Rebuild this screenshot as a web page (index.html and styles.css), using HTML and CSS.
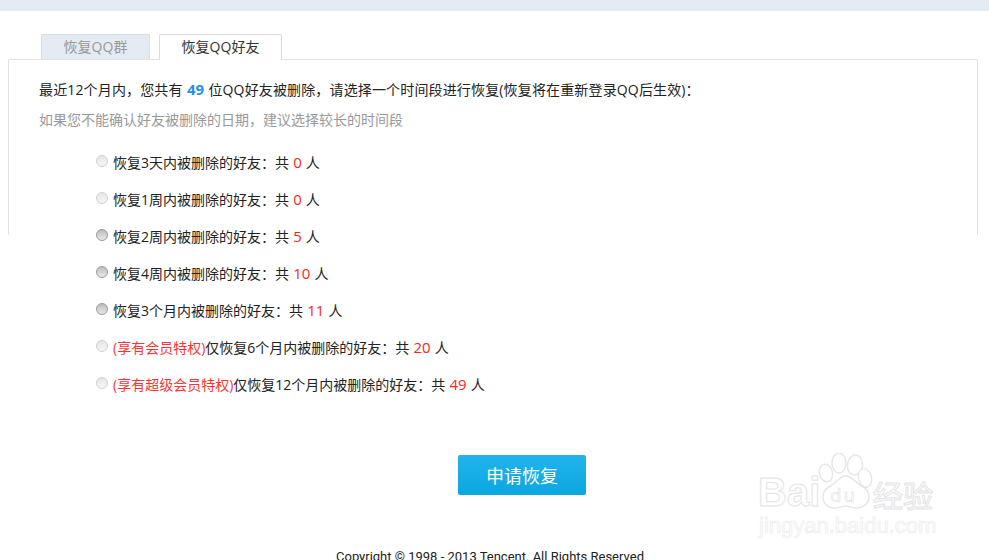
FILE: index.html
```html
<!DOCTYPE html>
<html lang="zh-CN">
<head>
<meta charset="utf-8">
<title>恢复QQ好友</title>
<link rel="stylesheet" href="styles.css">
</head>
<body>
<div class="topbar"></div>
<main class="page">
  <nav class="tabs">
    <a class="tab">恢复QQ群</a>
    <a class="tab tab-active">恢复QQ好友</a>
  </nav>
  <section class="panel">
    <p class="lead">最近12个月内，您共有 <b class="total">49</b> 位QQ好友被删除，请选择一个时间段进行恢复(恢复将在重新登录QQ后生效)：</p>
    <p class="hint">如果您不能确认好友被删除的日期，建议选择较长的时间段</p>
    <ul class="options">
      <li class="option"><span class="radio"></span><span>恢复3天内被删除的好友：共 <em class="num">0</em> 人</span></li>
      <li class="option"><span class="radio"></span><span>恢复1周内被删除的好友：共 <em class="num">0</em> 人</span></li>
      <li class="option"><span class="radio radio-on"></span><span>恢复2周内被删除的好友：共 <em class="num">5</em> 人</span></li>
      <li class="option"><span class="radio radio-on"></span><span>恢复4周内被删除的好友：共 <em class="num">10</em> 人</span></li>
      <li class="option"><span class="radio radio-on"></span><span>恢复3个月内被删除的好友：共 <em class="num">11</em> 人</span></li>
      <li class="option"><span class="radio"></span><span><span class="vip">(享有会员特权)</span>仅恢复6个月内被删除的好友：共 <em class="num">20</em> 人</span></li>
      <li class="option"><span class="radio"></span><span><span class="vip">(享有超级会员特权)</span>仅恢复12个月内被删除的好友：共 <em class="num">49</em> 人</span></li>
    </ul>
  </section>
  <div class="actions"><button class="submit" type="button">申请恢复</button></div>
  <footer class="footer">Copyright © 1998 - 2013 Tencent. All Rights Reserved</footer>
</main>
<div class="watermark">
  <svg class="paw" width="62" height="62" viewBox="0 0 62 62" fill="#fff" stroke="#e6e6e6" stroke-width="1.4">
    <ellipse cx="9" cy="20" rx="6.5" ry="9" transform="rotate(-15 9 20)"/>
    <ellipse cx="22" cy="10" rx="7" ry="10"/>
    <ellipse cx="38" cy="12" rx="7.5" ry="10" transform="rotate(8 38 12)"/>
    <ellipse cx="48" cy="25" rx="6.5" ry="9.5" transform="rotate(-15 48 25)"/>
    <path d="M29 23c6 0 9 6 14 9 6 3 9 7 9 12 0 7-6 11-13 11-4 0-7-2-10-2s-7 2-11 2c-7 0-12-4-12-11 0-5 3-9 9-12 5-3 8-9 14-9z"/>
  </svg>
  <span class="wm-bai">Bai</span>
  <span class="wm-du">du</span>
  <span class="wm-cn">经验</span>
  <span class="wm-url">jingyan.baidu.com</span>
</div>
</body>
</html>
```
FILE: styles.css
```css
html, body {
  margin: 0;
  height: 560px;
  overflow: hidden;
  background: #fff;
}
body {
  position: relative;
  font-family: "Open Sans", "Noto Sans CJK SC", sans-serif;
  font-size: 14px;
  color: #222;
}
.topbar {
  height: 11px;
  background: #e4ebf2;
}
.page {
  padding: 23px 11px 0 8px;
}
.tabs {
  display: flex;
  gap: 9px;
  padding-left: 33px;
  height: 25px;
  position: relative;
  z-index: 1;
}
.tab {
  box-sizing: border-box;
  width: 109px;
  height: 25px;
  border: 1px solid #d9dde2;
  border-bottom: 0;
  border-radius: 2px 2px 0 0;
  background: #e4ebf2;
  color: #999;
  text-align: center;
  line-height: 23px;
}
.tab-active {
  width: 123px;
  height: 26px;
  background: #fff;
  color: #333;
}
.panel {
  box-sizing: border-box;
  height: 176px;
  padding: 19px 0 0 30px;
  border: 1px solid #e2e2e2;
  border-bottom: 0;
  border-radius: 2px 2px 0 0;
}
.lead, .hint {
  margin: 0;
  height: 30px;
  line-height: 22px;
  white-space: nowrap;
}
.lead {
  letter-spacing: 0.15px;
  word-spacing: 0.5px;
  color: #222;
}
.total {
  font-size: 15px;
  line-height: 1;
  letter-spacing: 0;
  color: #2a8fe8;
}
.hint {
  color: #999;
}
.options {
  margin: 0;
  padding: 4px 0 0 57px;
  list-style: none;
}
.option {
  display: flex;
  align-items: center;
  gap: 5px;
  height: 37px;
  white-space: nowrap;
  word-spacing: 0.5px;
}
.radio {
  box-sizing: border-box;
  width: 12px;
  height: 12px;
  margin-top: -1px;
  border: 1px solid #d0d0d0;
  border-radius: 50%;
  background: linear-gradient(#e6e6e6, #f6f6f6);
}
.radio-on {
  border-color: #9a9a9a;
  background: linear-gradient(#bdbdbd, #e8e8e8);
}
.num {
  font-style: normal;
  font-size: 15px;
  line-height: 1;
  color: #f22;
}
.vip {
  color: #f33;
}
.actions {
  display: flex;
  justify-content: center;
  margin-top: 220px;
  padding-left: 58px;
}
.submit {
  width: 128px;
  height: 40px;
  border: 0;
  border-radius: 2px;
  background: linear-gradient(#22b4ec, #0ca6e0);
  color: #fff;
  font: 18px "Noto Sans CJK SC", sans-serif;
}
.footer {
  margin-top: 53px;
  padding-left: 328px;
  font-family: "Roboto", sans-serif;
  font-size: 13px;
  line-height: 18px;
  white-space: nowrap;
  color: #222;
}
.watermark {
  position: absolute;
  left: 0;
  top: 0;
  width: 989px;
  height: 560px;
  pointer-events: none;
}
.paw {
  position: absolute;
  left: 817px;
  top: 453px;
}
.wm-bai, .wm-du, .wm-cn, .wm-url {
  position: absolute;
  font-family: "Liberation Sans", sans-serif;
  color: #fff;
  -webkit-text-stroke: 1px #e4e4e4;
  white-space: nowrap;
}
.wm-bai {
  left: 758px;
  top: 471px;
  font-size: 40px;
  font-weight: bold;
  line-height: 42px;
}
.wm-du {
  left: 830px;
  top: 484px;
  font-family: "DejaVu Sans", sans-serif;
  font-size: 18px;
  letter-spacing: 2px;
  line-height: 24px;
  -webkit-text-stroke: 0.6px #e0e0e0;
}
.wm-cn {
  left: 873px;
  top: 478px;
  font-family: "Noto Sans CJK SC", sans-serif;
  font-size: 30px;
  line-height: 32px;
}
.wm-url {
  left: 759px;
  top: 513px;
  font-size: 22px;
  line-height: 26px;
  -webkit-text-stroke: 0.7px #ececec;
}
```
